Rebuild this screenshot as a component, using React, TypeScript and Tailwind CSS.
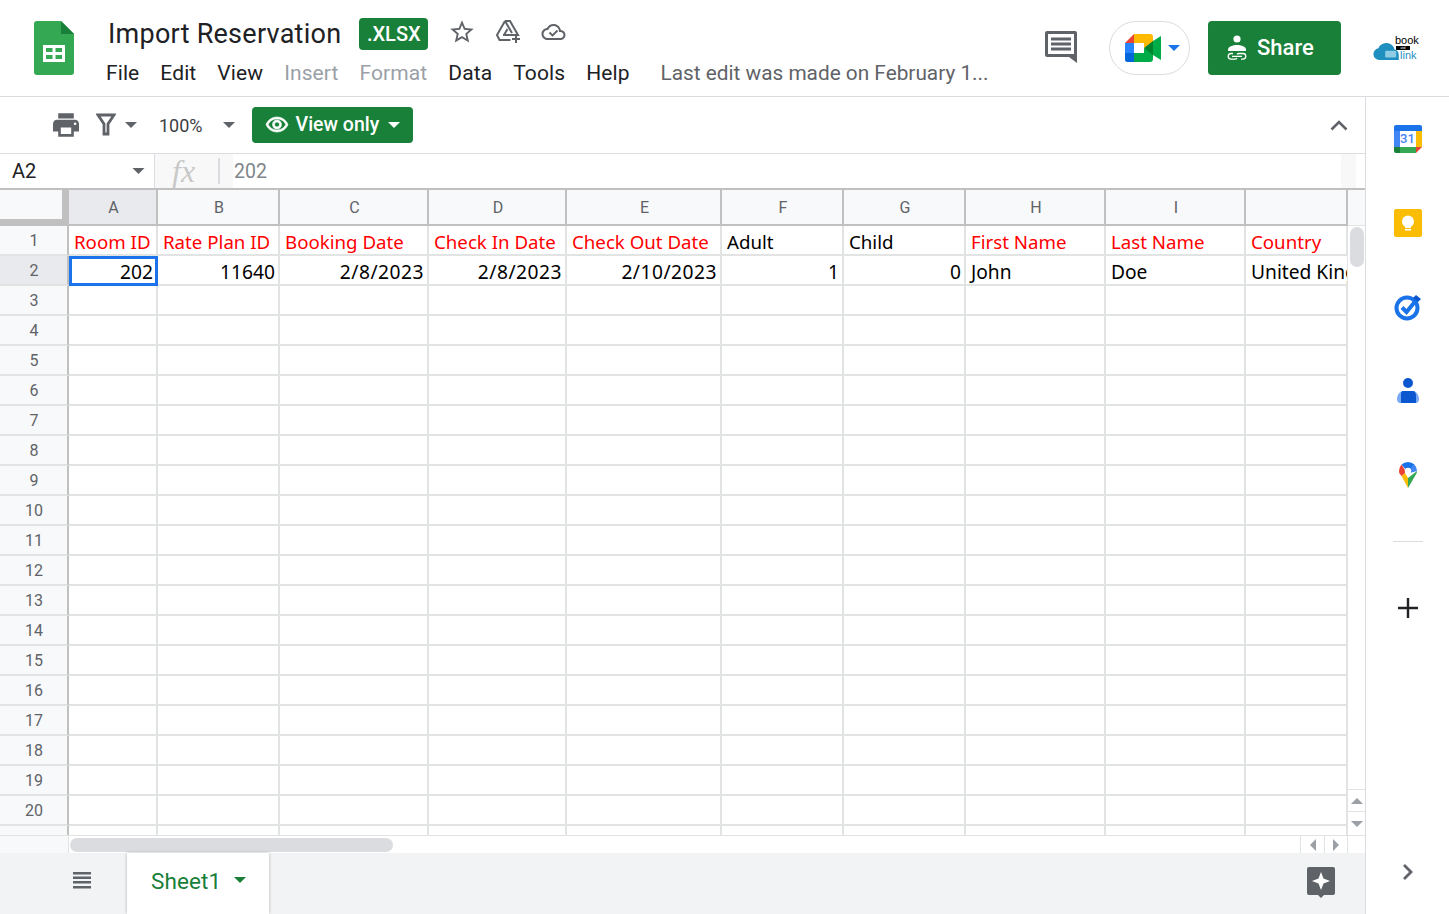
import React from 'react';

const columns = ['A', 'B', 'C', 'D', 'E', 'F', 'G', 'H', 'I', ''];
const widths = [
  'w-[89px]', 'w-[122px]', 'w-[149px]', 'w-[138px]', 'w-[155px]',
  'w-[122px]', 'w-[122px]', 'w-[140px]', 'w-[140px]', 'w-[102px]',
];
const headers = ['Room ID', 'Rate Plan ID', 'Booking Date', 'Check In Date', 'Check Out Date', 'Adult', 'Child', 'First Name', 'Last Name', 'Country'];
const redHeaders = [true, true, true, true, true, false, false, true, true, true];
const second = ['202', '11640', '2/8/2023', '2/8/2023', '2/10/2023', '1', '0', 'John', 'Doe', 'United Kingdom'];
const rows = Array.from({ length: 18 }, (_, i) => i + 3);

function SheetsLogo() {
  return (
    <svg width="40" height="54" viewBox="0 0 40 54">
      <path d="M3 0h24l13 13v38a3 3 0 0 1-3 3H3a3 3 0 0 1-3-3V3a3 3 0 0 1 3-3z" fill="#34a853" />
      <path d="M27 0l13 13H27z" fill="#188038" />
      <path d="M9 24h22v17H9z" fill="#fff" />
      <path d="M12 27h6.500v4H12zM21.500 27H28v4h-6.500zM12 34h6.500v4H12zM21.500 34H28v4h-6.500z" fill="#34a853" />
    </svg>
  );
}

function Caret({ className }: { className: string }) {
  return (
    <svg viewBox="0 0 12 6" className={className}>
      <path d="M0 0h12L6 6z" fill="currentColor" />
    </svg>
  );
}

function MeetLogo() {
  return (
    <svg width="36" height="28" viewBox="0 0 36 28">
      <path d="M9 0L0 9h9z" fill="#ea4335" />
      <path d="M0 9h9v10H0z" fill="#2684fc" />
      <path d="M0 19h9v9H2.500A2.500 2.500 0 0 1 0 25.500z" fill="#0066da" />
      <path d="M9 0h16a3 3 0 0 1 3 3v6.500l-9 4.500V9H9z" fill="#ffba00" />
      <path d="M9 19h10v-5l9 4.500V25a3 3 0 0 1-3 3H9z" fill="#00ac47" />
      <path d="M19 14l9-7v14z" fill="#00832d" />
      <path d="M28 7l8-5v24l-8-5z" fill="#00ac47" />
    </svg>
  );
}

function ShareIcon() {
  return (
    <svg width="20" height="26" viewBox="0 0 20 26" fill="#fff">
      <circle cx="10" cy="4" r="3.600" />
      <path d="M1 14.500c0-3 5-4.500 9-4.500s9 1.500 9 4.500V16H1z" />
      <path d="M6 18.500H4a2.800 2.800 0 0 0 0 5.600h4a2.800 2.800 0 0 0 2-.8M14 24.100h2a2.800 2.800 0 0 0 0-5.600h-4a2.800 2.800 0 0 0-2 .8M5 21.300h10" fill="none" stroke="#fff" strokeWidth="1.300" />
    </svg>
  );
}

function BookLinkLogo() {
  return (
    <div className="relative w-[46px] h-[26px] font-['Liberation_Sans',sans-serif]">
      <svg width="26" height="17" viewBox="0 0 30 20" className="absolute left-[1px] top-[9px]">
        <path d="M7 20a7 7 0 0 1-1-13.900C7.500 2.500 11 0 15 0c5 0 9 3 10 7.500 3 .5 5 3 5 6.200V20z" fill="#1f8fc0" />
        <rect x="14" y="9" width="13" height="8" rx="1.500" fill="#8fcbe3" />
      </svg>
      <span className="absolute left-[23px] top-[2px] text-[11px] leading-[9px] text-black">book</span>
      <span className="absolute left-[24px] top-[12px] w-[14px] h-[4px] bg-black text-[3px] leading-[4px] text-white text-center">and</span>
      <span className="absolute left-[28px] top-[16px] text-[11px] leading-[10px] text-[#1f8fc0]">link</span>
    </div>
  );
}

function SidePanel() {
  return (
    <div className="w-[83px] flex flex-col items-center shrink-0 bg-white">
      <div className="h-[84px] flex items-center justify-center">
        <div className="relative w-[28px] h-[28px]">
          <svg width="28" height="28" viewBox="0 0 28 28">
            <path d="M2 0h24a2 2 0 0 1 2 2v4H0V2a2 2 0 0 1 2-2z" fill="#1a73e8" />
            <path d="M0 6h6v16H0z" fill="#4285f4" />
            <path d="M22 6h6v16h-6z" fill="#fbbc04" />
            <path d="M6 22h16v6H6z" fill="#34a853" />
            <path d="M0 22h6v6H2a2 2 0 0 1-2-2z" fill="#188038" />
            <path d="M22 22h6l-6 6z" fill="#ea4335" />
          </svg>
          <span className="absolute left-[6px] top-[6px] w-[16px] h-[16px] text-center text-[13px] leading-[16px] font-medium text-[#4285f4] font-['Roboto',sans-serif]">31</span>
        </div>
      </div>
      <div className="h-[84px] flex items-center justify-center">
        <svg width="28" height="28" viewBox="0 0 28 28">
          <rect width="28" height="28" rx="2" fill="#fbbc04" />
          <circle cx="14" cy="12.500" r="6" fill="#fff" />
          <path d="M11 17h6v2h-6zM11 20h6v1.500h-6z" fill="#fff" />
        </svg>
      </div>
      <div className="h-[84px] flex items-center justify-center">
        <svg width="28" height="28" viewBox="0 0 28 28">
          <circle cx="13" cy="15" r="10.500" fill="none" stroke="#1a73e8" strokeWidth="4" />
          <path d="M8 14.500l4.500 4.500L24 5" fill="none" stroke="#1a73e8" strokeWidth="4" />
          <path d="M22 2l5 4-3 3-5-4z" fill="#0b57d0" />
        </svg>
      </div>
      <div className="h-[84px] flex items-center justify-center">
        <svg width="22" height="26" viewBox="0 0 22 26">
          <path d="M6 13h10c3 0 6 4 6 8 0 2-1 4-3 4H3c-2 0-3-2-3-4 0-4 3-8 6-8z" fill="#7baaf7" />
          <circle cx="11" cy="5" r="5" fill="#0b57d0" />
          <path d="M6 13h10c2 0 3 2 3 5v7H4v-7c0-3 0-5 2-5z" fill="#0b57d0" />
        </svg>
      </div>
      <div className="h-[84px] flex items-center justify-center">
        <svg width="18" height="26" viewBox="0 0 18 26">
          <path d="M18 9c0 2-1 3.500-2 5L9 26V16z" fill="#34a853" />
          <path d="M2.500 14L9 26V16L6 11z" fill="#fbbc04" />
          <path d="M0 9c0 2 1 3.500 2.500 5L7 10 2.600 2.600A9 9 0 0 0 0 9z" fill="#ea4335" />
          <path d="M2.600 2.600A9 9 0 0 1 9 0a9 9 0 0 1 6.400 2.600L11 8H7z" fill="#1a73e8" />
          <path d="M15.400 2.600A9 9 0 0 1 18 9l-7 2-1-3z" fill="#4285f4" />
          <circle cx="9" cy="9" r="3.200" fill="#fff" />
        </svg>
      </div>
      <div className="w-[30px] h-px bg-[#dadce0] mt-[24px]" />
      <div className="mt-[54px] h-[24px] flex items-center justify-center">
        <svg width="20" height="20" viewBox="0 0 20 20">
          <path d="M8.800 0h2.400v8.800H20v2.400h-8.800V20H8.800v-8.800H0V8.800h8.800z" fill="#202124" />
        </svg>
      </div>
      <div className="mt-auto h-[84px] flex items-center justify-center">
        <svg width="12" height="18" viewBox="0 0 12 18">
          <path d="M2 2l7 7-7 7" fill="none" stroke="#5f6368" strokeWidth="2.800" />
        </svg>
      </div>
    </div>
  );
}

function Header() {
  return (
    <div className="h-[97px] flex border-b border-[#dadce0] shrink-0">
      <div className="w-[108px] pl-[34px] pt-[21px] shrink-0">
        <SheetsLogo />
      </div>
      <div className="flex-1 pt-[17px]">
        <div className="flex items-center h-[34px]">
          <span className="text-[27px] leading-[34px] tracking-[0.25px] text-[#202124]">Import Reservation</span>
          <span className="ml-[18px] w-[69px] h-[32px] rounded-[4px] bg-[#188038] text-white text-[20px] font-medium flex items-center justify-center">.XLSX</span>
          <svg width="28" height="28" viewBox="0 0 24 24" fill="#5f6368" className="ml-[20px] mb-[4px]">
            <path d="M22 9.240l-7.190-.62L12 2 9.190 8.630 2 9.240l5.460 4.730L5.820 21 12 17.270 18.180 21l-1.630-7.030L22 9.240zM12 15.400l-3.760 2.270 1-4.280-3.320-2.880 4.380-.38L12 6.100l1.710 4.040 4.380.38-3.320 2.880 1 4.280L12 15.400z" />
          </svg>
          <svg width="27" height="26" viewBox="0 0 27 26" fill="none" stroke="#5f6368" strokeWidth="2" className="ml-[19px] mb-[4px]">
            <path d="M10 2h5l8 14h-6M10 2L2 16l2.500 5h11M10 2l7 12M9 16l3.500-6M8 16h9" />
            <path d="M21 16v8M17 20h8" />
          </svg>
          <svg width="25" height="18" viewBox="0 0 24 18" fill="#5f6368" className="ml-[19px] mb-[4px]">
            <path d="M19.350 7.040C18.670 3.590 15.640 1 12 1 9.110 1 6.600 2.640 5.350 5.040 2.340 5.360 0 7.910 0 11c0 3.310 2.690 6 6 6h13c2.760 0 5-2.240 5-5 0-2.640-2.050-4.780-4.650-4.960zM19 15H6c-2.210 0-4-1.790-4-4s1.790-4 4-4h.71C7.370 4.690 9.480 3 12 3c3.040 0 5.500 2.460 5.500 5.500V9H19c1.660 0 3 1.340 3 3s-1.340 3-3 3z" />
            <path d="M8 9.500l3 3 5-5" fill="none" stroke="#5f6368" strokeWidth="1.800" />
          </svg>
        </div>
        <div className="flex items-center h-[26px] mt-[10px] text-[21px] tracking-[0.1px] text-[#202124] -ml-[2px]">
          <span>File</span>
          <span className="ml-[21px]">Edit</span>
          <span className="ml-[21px]">View</span>
          <span className="ml-[21px] text-[#9aa0a6]">Insert</span>
          <span className="ml-[21px] text-[#9aa0a6]">Format</span>
          <span className="ml-[21px]">Data</span>
          <span className="ml-[21px]">Tools</span>
          <span className="ml-[21px]">Help</span>
          <span className="ml-[31px] text-[20.800px] tracking-normal text-[#5f6368]">Last edit was made on February 1...</span>
        </div>
      </div>
      <div className="flex items-start pt-[21px] pr-[31px]">
        <svg width="32" height="32" viewBox="0 0 32 32" className="mt-[10px]">
          <path d="M2 0h28a2 2 0 0 1 2 2v30l-8-6H2a2 2 0 0 1-2-2V2a2 2 0 0 1 2-2z" fill="#5f6368" />
          <path d="M3 3h26v20H3z" fill="#fff" />
          <path d="M6 6.500h20v3H6zM6 11.500h20v3H6zM6 16.500h20v3H6z" fill="#5f6368" />
        </svg>
        <div className="ml-[32px] w-[81px] h-[54px] rounded-full border border-[#dadce0] flex items-center pl-[15px]">
          <MeetLogo />
          <Caret className="w-[12px] h-[6px] ml-[7px] text-[#1a73e8]" />
        </div>
        <div className="ml-[18px] w-[133px] h-[54px] rounded-[4px] bg-[#188038] text-white flex items-center pl-[19px]">
          <ShareIcon />
          <span className="ml-[10px] pb-[2px] text-[22px] font-medium">Share</span>
        </div>
        <div className="ml-[31px] mt-[13px]">
          <BookLinkLogo />
        </div>
      </div>
    </div>
  );
}

function Toolbar() {
  return (
    <div className="h-[57px] flex items-center border-b border-[#dadce0] shrink-0 pl-[53px]">
      <svg width="26" height="26" viewBox="2 2 20 20" fill="#5f6368">
        <path d="M19 8H5c-1.660 0-3 1.340-3 3v6h4v4h12v-4h4v-6c0-1.660-1.340-3-3-3zm-3 11H8v-5h8v5zm3-7c-.550 0-1-.450-1-1s.450-1 1-1 1 .450 1 1-.450 1-1 1zm-1-9H6v4h12V3z" />
      </svg>
      <svg width="20" height="24" viewBox="0 0 20 24" fill="none" stroke="#5f6368" strokeWidth="2.800" className="ml-[17px] mb-[3px]">
        <path d="M2 3h16l-6 9v10h-4V12z" />
      </svg>
      <Caret className="w-[12px] h-[6px] ml-[9px] text-[#5f6368]" />
      <span className="ml-[22px] text-[18px] text-[#3c4043]">100%</span>
      <Caret className="w-[12px] h-[6px] ml-[20px] text-[#5f6368]" />
      <div className="ml-[17px] w-[161px] h-[36px] rounded-[4px] bg-[#188038] text-white flex items-center pl-[13px]">
        <svg width="24" height="24" viewBox="0 0 24 24" fill="#fff" stroke="#fff" strokeWidth="0.600">
          <path d="M12 6a9.770 9.770 0 0 1 8.820 5.500C19.170 14.870 15.790 17 12 17s-7.170-2.130-8.820-5.500A9.770 9.770 0 0 1 12 6m0-2C7 4 2.730 7.110 1 11.500 2.730 15.890 7 19 12 19s9.270-3.110 11-7.500C21.270 7.110 17 4 12 4zm0 5a2.500 2.500 0 0 1 0 5 2.500 2.500 0 0 1 0-5m0-2c-2.480 0-4.500 2.020-4.500 4.500S9.520 16 12 16s4.500-2.020 4.500-4.500S14.480 7 12 7z" />
        </svg>
        <span className="ml-[7px] text-[19.500px] font-medium">View only</span>
        <Caret className="w-[12px] h-[6px] ml-[9px] text-white" />
      </div>
      <svg width="18" height="11" viewBox="0 0 18 11" fill="none" stroke="#5f6368" strokeWidth="2.600" className="ml-auto mr-[17px]">
        <path d="M1.500 9.500L9 2l7.500 7.500" />
      </svg>
    </div>
  );
}

function FormulaBar() {
  return (
    <div className="h-[36px] flex items-stretch shrink-0 border-b-2 border-[#c0c0c0]">
      <div className="w-[155px] flex items-center pl-[12px] pr-[9px] border-r border-[#dadce0] shrink-0">
        <span className="text-[20px] text-[#202124]">A2</span>
        <Caret className="w-[13px] h-[6px] ml-auto text-[#5f6368]" />
      </div>
      <div className="w-[78px] bg-[#f8f8f8] flex items-center shrink-0">
        <span className="ml-[17px] w-[28px] text-[32px] leading-none italic text-[#c8c8c8] font-['Liberation_Serif',serif]">fx</span>
        <div className="ml-[18px] w-[2px] h-[26px] bg-[#dadce0]" />
      </div>
      <div className="flex-1 pl-[1px] pt-[1px] flex items-center text-[19.500px] text-[#80868b]">202</div>
      <div className="w-[15px] bg-[#f8f8f8] shrink-0" />
      <div className="w-[9px] shrink-0" />
    </div>
  );
}

function VerticalScrollbar() {
  return (
    <div className="w-[17px] shrink-0 flex flex-col bg-white">
      <div className="h-[36px] bg-[#f8f9fa] border-b border-[#e2e3e3] shrink-0" />
      <div className="flex-1 pl-[2px] pt-[1px]">
        <div className="w-[14px] h-[40px] rounded-[7px] bg-[#dadce0]" />
      </div>
      <div className="h-[23px] border-y border-[#e2e3e3] flex items-center justify-center shrink-0">
        <Caret className="w-[12px] h-[6px] rotate-180 text-[#9aa0a6]" />
      </div>
      <div className="h-[23px] flex items-center justify-center shrink-0">
        <Caret className="w-[12px] h-[6px] text-[#9aa0a6]" />
      </div>
    </div>
  );
}

function dataCellClass(i: number) {
  // selected cell has its own thick border, the rest are plain grid lines
  if (i === 0) return 'border-[3px] border-[#1a73e8] text-right pr-[2px] leading-[25px]';
  if (i === 9) return 'border-r border-b-2 border-[#e2e3e3] leading-[31px] pl-[5px]';
  const dateSpacing = i >= 2 && i <= 4 ? 'tracking-[0.5px]' : '';
  const align = i <= 6 ? 'text-right pr-[3px]' : 'pl-[5px]';
  return `border-r-2 border-b-2 border-[#e2e3e3] leading-[31px] ${align} ${dateSpacing}`;
}

function Grid() {
  return (
    <div className="flex flex-1 min-h-0">
      <div className="w-[1348px] shrink-0 overflow-hidden">
        {/* column letters */}
        <div className="flex h-[36px] border-b-2 border-[#c0c0c0]">
          <div className="w-[69px] shrink-0 flex border-r border-[#c0c0c0]">
            <div className="w-[62px] shrink-0">
              <div className="h-[29px] bg-[#f8f9fa]" />
              <div className="h-[5px] bg-[#c0c0c0]" />
            </div>
            <div className="flex-1 bg-[#c0c0c0]" />
          </div>
          {columns.map((c, i) => (
            <div
              key={i}
              className={`${widths[i]} shrink-0 flex items-center justify-center pt-[1px] pl-[2px] text-[16px] text-[#5f6368] border-r-2 border-[#c0c0c0] ${i === 0 ? 'bg-[#e8eaed]' : 'bg-[#f8f9fa]'}`}
            >
              {c}
            </div>
          ))}
        </div>
        {/* header row */}
        <div className="flex h-[30px]">
          <div className="w-[69px] shrink-0 bg-[#f8f9fa] flex items-center justify-center pt-[2px] pl-[1px] text-[16px] text-[#5f6368] border-r-2 border-b-2 border-r-[#c0c0c0] border-b-[#e2e3e3]">1</div>
          {headers.map((h, i) => (
            <div
              key={h}
              className={`${widths[i]} shrink-0 overflow-hidden whitespace-nowrap pl-[5px] text-[18.700px] leading-[31px] font-['Noto_Sans',sans-serif] border-r-2 border-b-2 border-[#e2e3e3] ${redHeaders[i] ? 'text-[#ff0000]' : 'text-black'}`}
            >
              {h}
            </div>
          ))}
        </div>
        {/* data row */}
        <div className="flex h-[30px]">
          <div className="w-[69px] shrink-0 bg-[#e8eaed] flex items-center justify-center pt-[2px] pl-[1px] text-[16px] text-[#5f6368] border-r-2 border-b-2 border-r-[#c0c0c0] border-b-[#e2e3e3]">2</div>
          {second.map((v, i) => (
            <div
              key={i}
              className={`${widths[i]} shrink-0 overflow-hidden whitespace-nowrap text-[19.200px] text-black font-['Noto_Sans',sans-serif] ${dataCellClass(i)}`}
            >
              {v}
            </div>
          ))}
        </div>
        {/* empty rows */}
        {rows.map((n) => (
          <div key={n} className="flex h-[30px]">
            <div className="w-[69px] shrink-0 bg-[#f8f9fa] flex items-center justify-center pt-[2px] pl-[1px] text-[16px] text-[#5f6368] border-r-2 border-b-2 border-r-[#c0c0c0] border-b-[#e2e3e3]">{n}</div>
            {widths.map((w, i) => (
              <div key={i} className={`${w} shrink-0 border-r-2 border-b-2 border-[#e2e3e3]`} />
            ))}
          </div>
        ))}
        {/* partial row under 20 */}
        <div className="flex h-[10px]">
          <div className="w-[69px] shrink-0 bg-[#f8f9fa] border-r-2 border-[#c0c0c0]" />
          {widths.map((w, i) => (
            <div key={i} className={`${w} shrink-0 border-r-2 border-[#e2e3e3]`} />
          ))}
        </div>
      </div>
      <VerticalScrollbar />
    </div>
  );
}

function HorizontalScrollbar() {
  return (
    <div className="h-[18px] flex shrink-0 border-t border-[#e2e3e3] bg-white">
      <div className="w-[69px] bg-[#f8f9fa] border-r border-[#e2e3e3] shrink-0" />
      <div className="flex-1 pt-[2px] pl-[1px]">
        <div className="w-[323px] h-[14px] rounded-[7px] bg-[#dadce0]" />
      </div>
      <div className="w-[24px] border-l border-[#e2e3e3] flex items-center justify-center shrink-0">
        <Caret className="w-[12px] h-[6px] rotate-90 text-[#9aa0a6]" />
      </div>
      <div className="w-[23px] border-l border-[#e2e3e3] flex items-center justify-center shrink-0">
        <Caret className="w-[12px] h-[6px] -rotate-90 text-[#9aa0a6]" />
      </div>
      <div className="w-[18px] border-l border-[#e2e3e3] shrink-0" />
    </div>
  );
}

function TabBar() {
  return (
    <div className="h-[61px] flex bg-[#f1f3f4] shrink-0">
      <div className="w-[127px] shrink-0 pl-[73px] pt-[19px]">
        <svg width="18" height="17" viewBox="0 0 18 17" fill="#5f6368">
          <path d="M0 0h18v2.500H0zM0 4.500h18V7H0zM0 9h18v2.500H0zM0 14h18v2.500H0z" />
        </svg>
      </div>
      <div className="w-[142px] bg-white shadow-[0_0_3px_rgba(60,64,67,0.35)] flex items-start pl-[24px] pt-[15px] text-[#188038] shrink-0">
        <span className="text-[22.500px] leading-[26px] tracking-[0.1px]">Sheet1</span>
        <Caret className="w-[12px] h-[6px] ml-[13px] mt-[9px] text-[#188038]" />
      </div>
      <div className="ml-auto mr-[30px] mt-[14px]">
        <svg width="28" height="32" viewBox="0 0 28 32">
          <path d="M2 0h24a2 2 0 0 1 2 2v24a2 2 0 0 1-2 2h-9l-3 3-3-3H2a2 2 0 0 1-2-2V2a2 2 0 0 1 2-2z" fill="#5f6368" />
          <path d="M14 5l2.500 6.500L23 14l-6.500 2.500L14 23l-2.500-6.500L5 14l6.500-2.500z" fill="#fff" />
        </svg>
      </div>
    </div>
  );
}

export default function App() {
  return (
    <div className="w-[1449px] h-[914px] flex overflow-hidden bg-white font-['Roboto',sans-serif]">
      <div className="flex-1 flex flex-col min-w-0">
        <Header />
        <div className="flex flex-1 min-h-0">
          <div className="w-[1366px] shrink-0 flex flex-col border-r border-[#dadce0]">
            <Toolbar />
            <FormulaBar />
            <Grid />
            <HorizontalScrollbar />
            <TabBar />
          </div>
          <SidePanel />
        </div>
      </div>
    </div>
  );
}
